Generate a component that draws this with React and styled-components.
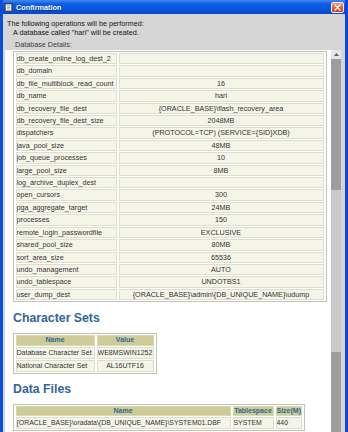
import styled, { createGlobalStyle } from "styled-components";

const GlobalStyle = createGlobalStyle`
    html, body {
        margin: 0;
        padding: 0;
        overflow: hidden;
        background: #ffffff;
    }
    body {
        font-family: "Liberation Sans", Arial, sans-serif;
    }
`;

const Window = styled.div`
    width: 348px;
    height: 432px;
    box-sizing: border-box;
    display: flex;
    flex-direction: column;
    background: #d6d6d6;
    border-left: 3px solid #0a4fdc;
    border-right: 3px solid #0b44d4;
    overflow: hidden;
`;

const TitleBar = styled.div`
    flex: none;
    height: 14px;
    display: flex;
    align-items: center;
    gap: 3px;
    padding: 0 1px;
    background: linear-gradient(#3f88f2 0%, #0d5ce2 30%, #0556de 70%, #0747c6 100%);
`;

const TitleText = styled.span`
    color: #ffffff;
    font-size: 7.3px;
    font-weight: bold;
    text-shadow: 1px 1px 0 #0b2b8a;
`;

const CloseButton = styled.div`
    margin-left: auto;
    width: 13px;
    height: 11px;
    box-sizing: border-box;
    border: 1px solid #f4f4f4;
    border-radius: 2px;
    background: linear-gradient(#ee9a7e, #de5a3c 55%, #c8401f);
    display: flex;
    align-items: center;
    justify-content: center;
`;

const Intro = styled.div`
    flex: none;
    padding: 6px 0 0 4px;
    font-size: 7.2px;
    line-height: 8.5px;
    color: #141414;
`;

const IntroLine = styled.div`
    padding-left: ${p => p.$indent || 0}px;
    margin-top: ${p => p.$gap || 0}px;
    color: ${p => p.$muted ? "#3a3a3a" : "#141414"};
`;

const Pane = styled.div`
    flex: 1;
    min-height: 0;
    display: flex;
    margin: 0.5px 0 0 2px;
    background: #ffffff;
`;

const PaneContent = styled.div`
    flex: 1;
    overflow: hidden;
    padding: 1px 0 0 7.5px;
`;

const ScrollBar = styled.div`
    flex: none;
    width: 10px;
    display: flex;
    flex-direction: column;
    border-right: 4px solid #d9d5d5;
    background: #c9c9c9;
`;

const ScrollArrow = styled.div`
    height: 8.5px;
    background: #e6e6e6;
    display: flex;
    align-items: center;
    justify-content: center;
`;

const ScrollPart = styled.div`
    height: ${p => p.$h ? `${p.$h}px` : "auto"};
    flex: ${p => p.$h ? "none" : 1};
    background: ${p => p.$thumb ? "#9d9d9d" : "#cacaca"};
`;

const DetailTable = styled.table`
    width: 314px;
    table-layout: fixed;
    border: 1px solid #c4c4b2;
    border-collapse: separate;
    border-spacing: 2px 1px;
    font-size: 7.2px;
    color: #333333;
`;

const Cell = styled.td`
    box-sizing: border-box;
    width: ${p => p.$w ? `${p.$w}px` : "auto"};
    padding: 0;
    line-height: ${p => p.$lh || 9.4}px;
    background: #f5f5e7;
    border: 1px solid #dedecd;
    text-align: ${p => p.$center ? "center" : "left"};
    white-space: nowrap;
    overflow: hidden;
`;

const HeadCell = styled.th`
    box-sizing: border-box;
    width: ${p => p.$w ? `${p.$w}px` : "auto"};
    padding: 0;
    line-height: 8.5px;
    background: #cccc99;
    border: 1px solid #d9d9b0;
    color: #336699;
    font-size: 7px;
    font-weight: bold;
    text-align: center;
    white-space: nowrap;
    overflow: hidden;
`;

const SectionTitle = styled.h2`
    margin: ${p => p.$top}px 0 ${p => p.$bottom}px 0.5px;
    font-size: 12.3px;
    line-height: 14px;
    font-weight: bold;
    color: #336699;
`;

const SmallTable = styled.table`
    width: ${p => p.$w}px;
    table-layout: fixed;
    border: 1px solid #c4c4b2;
    border-collapse: separate;
    border-spacing: 2px 1px;
    font-size: ${p => p.$fs || 7}px;
    color: #333333;
`;

const params = [
    ["db_create_online_log_dest_2", ""],
    ["db_domain", ""],
    ["db_file_multiblock_read_count", "16"],
    ["db_name", "hari"],
    ["db_recovery_file_dest", "{ORACLE_BASE}\\flash_recovery_area"],
    ["db_recovery_file_dest_size", "2048MB"],
    ["dispatchers", "(PROTOCOL=TCP) (SERVICE={SID}XDB)"],
    ["java_pool_size", "48MB"],
    ["job_queue_processes", "10"],
    ["large_pool_size", "8MB"],
    ["log_archive_duplex_dest", ""],
    ["open_cursors", "300"],
    ["pga_aggregate_target", "24MB"],
    ["processes", "150"],
    ["remote_login_passwordfile", "EXCLUSIVE"],
    ["shared_pool_size", "80MB"],
    ["sort_area_size", "65536"],
    ["undo_management", "AUTO"],
    ["undo_tablespace", "UNDOTBS1"],
    ["user_dump_dest", "{ORACLE_BASE}\\admin\\{DB_UNIQUE_NAME}\\udump"],
];

const charsets = [
    ["Database Character Set", "WE8MSWIN1252"],
    ["National Character Set", "AL16UTF16"],
];

function WindowIcon() {
    return (
        <svg width="9" height="9" viewBox="0 0 9 9">
            <rect x="0.5" y="0.5" width="8" height="8" fill="#6b7a8c" stroke="#2a3b55" strokeWidth="0.8" />
            <rect x="2" y="1.5" width="5" height="6" fill="#f2f2f2" />
            <line x1="3" y1="3" x2="6" y2="3" stroke="#8a8a8a" strokeWidth="0.6" />
            <line x1="3" y1="4.5" x2="6" y2="4.5" stroke="#8a8a8a" strokeWidth="0.6" />
            <line x1="3" y1="6" x2="6" y2="6" stroke="#8a8a8a" strokeWidth="0.6" />
        </svg>
    );
}

function CloseIcon() {
    return (
        <svg width="7" height="7" viewBox="0 0 7 7">
            <path d="M1 1 L6 6 M6 1 L1 6" stroke="#ffffff" strokeWidth="1.4" strokeLinecap="round" />
        </svg>
    );
}

function UpArrow() {
    return (
        <svg width="5" height="3" viewBox="0 0 5 3">
            <path d="M0 3 L2.5 0 L5 3 Z" fill="#4d6185" />
        </svg>
    );
}

function App() {
    return (
        <>
            <GlobalStyle />
            <Window>
                <TitleBar>
                    <WindowIcon />
                    <TitleText>Confirmation</TitleText>
                    <CloseButton>
                        <CloseIcon />
                    </CloseButton>
                </TitleBar>
                <Intro>
                    <IntroLine>The following operations will be performed:</IntroLine>
                    <IntroLine $indent={6}>A database called "hari" will be created.</IntroLine>
                    <IntroLine $indent={8} $gap={4} $muted>Database Details:</IntroLine>
                </Intro>
                <Pane>
                    <PaneContent>
                        <DetailTable>
                            <tbody>
                                {params.map(([name, value]) => (
                                    <tr key={name}>
                                        <Cell $w={101}>{name}</Cell>
                                        <Cell $center>{value}</Cell>
                                    </tr>
                                ))}
                            </tbody>
                        </DetailTable>

                        <SectionTitle $top={9} $bottom={8}>Character Sets</SectionTitle>
                        <SmallTable $w={144}>
                            <thead>
                                <tr>
                                    <HeadCell $w={79}>Name</HeadCell>
                                    <HeadCell>Value</HeadCell>
                                </tr>
                            </thead>
                            <tbody>
                                {charsets.map(([name, value]) => (
                                    <tr key={name}>
                                        <Cell $w={79} $lh={10}>{name}</Cell>
                                        <Cell $center $lh={10}>{value}</Cell>
                                    </tr>
                                ))}
                            </tbody>
                        </SmallTable>

                        <SectionTitle $top={8} $bottom={8}>Data Files</SectionTitle>
                        <SmallTable $w={292} $fs={6.9}>
                            <thead>
                                <tr>
                                    <HeadCell $w={215}>Name</HeadCell>
                                    <HeadCell $w={41}>Tablespace</HeadCell>
                                    <HeadCell>Size(M)</HeadCell>
                                </tr>
                            </thead>
                            <tbody>
                                <tr>
                                    <Cell $w={215} $lh={10}>{"{ORACLE_BASE}\\oradata\\{DB_UNIQUE_NAME}\\SYSTEM01.DBF"}</Cell>
                                    <Cell $lh={10}>SYSTEM</Cell>
                                    <Cell $lh={10}>440</Cell>
                                </tr>
                            </tbody>
                        </SmallTable>
                    </PaneContent>
                    <ScrollBar>
                        <ScrollArrow>
                            <UpArrow />
                        </ScrollArrow>
                        <ScrollPart $thumb $h={131} />
                        <ScrollPart $h={162} />
                        <ScrollPart $thumb />
                    </ScrollBar>
                </Pane>
            </Window>
        </>
    );
}

export default App;
